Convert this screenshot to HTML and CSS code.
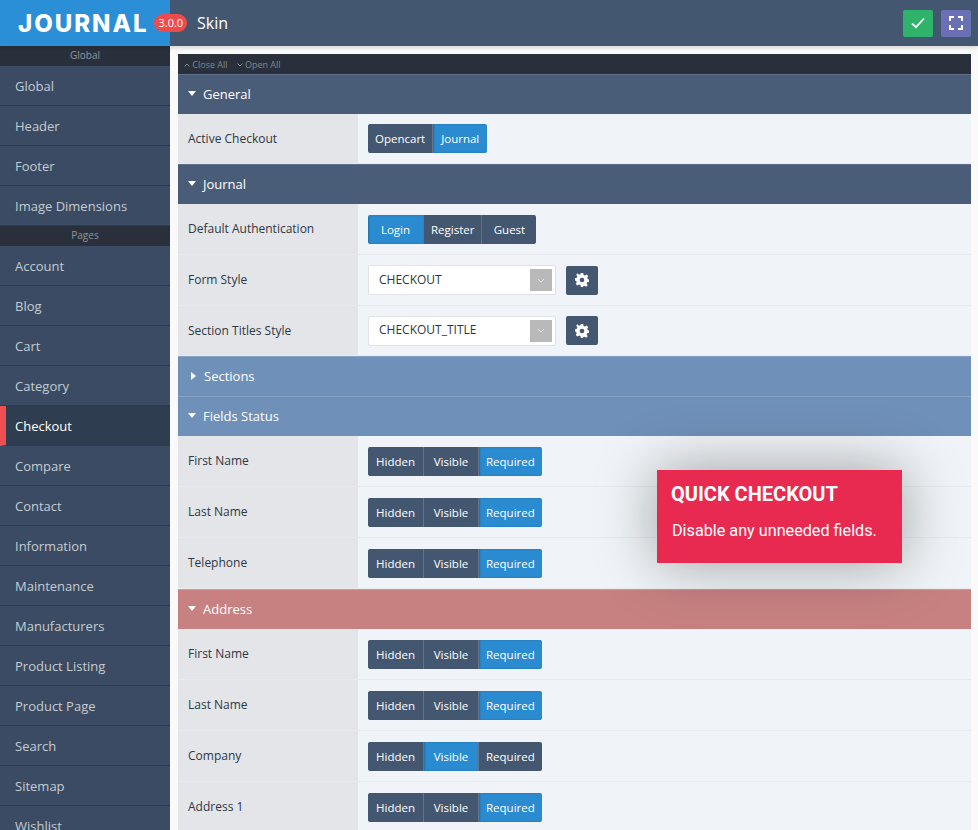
FILE: index.html
```html
<!DOCTYPE html>
<html lang="en">
<head>
  <meta charset="UTF-8" />
  <title>Journal - Skin</title>
  <link rel="stylesheet" href="styles.css">
</head>
<body>

  <header class="topbar">
    <div class="logo">
      <span class="logo-text">JOURNAL</span>
      <span class="version">3.0.0</span>
    </div>
    <div class="page-title">Skin</div>
    <div class="top-actions">
      <button class="top-btn save">
        <svg width="14" height="12" viewBox="0 0 14 12"><path d="M1 6.5 L5 10.2 L13 1.5" fill="none" stroke="#fff" stroke-width="1.8"/></svg>
      </button>
      <button class="top-btn full">
        <svg width="14" height="14" viewBox="0 0 14 14"><path d="M1 5 V1 H5 M9 1 H13 V5 M13 9 V13 H9 M5 13 H1 V9" fill="none" stroke="#fff" stroke-width="2"/></svg>
      </button>
    </div>
  </header>

  <div class="layout">
    <nav class="sidebar">
      <div class="side-title">Global</div>
      <a class="side-item">Global</a>
      <a class="side-item">Header</a>
      <a class="side-item">Footer</a>
      <a class="side-item">Image Dimensions</a>
      <div class="side-title">Pages</div>
      <a class="side-item">Account</a>
      <a class="side-item">Blog</a>
      <a class="side-item">Cart</a>
      <a class="side-item">Category</a>
      <a class="side-item active">Checkout</a>
      <a class="side-item">Compare</a>
      <a class="side-item">Contact</a>
      <a class="side-item">Information</a>
      <a class="side-item">Maintenance</a>
      <a class="side-item">Manufacturers</a>
      <a class="side-item">Product Listing</a>
      <a class="side-item">Product Page</a>
      <a class="side-item">Search</a>
      <a class="side-item">Sitemap</a>
      <a class="side-item">Wishlist</a>
    </nav>

    <main class="content">
      <div class="toolbar">
        <span class="tool">
          <svg width="6" height="4" viewBox="0 0 6 4"><path d="M0.5 3.5 L3 1 L5.5 3.5" fill="none" stroke="#7d8794" stroke-width="1"/></svg>
          Close All
        </span>
        <span class="tool">
          <svg width="6" height="4" viewBox="0 0 6 4"><path d="M0.5 0.5 L3 3 L5.5 0.5" fill="none" stroke="#7d8794" stroke-width="1"/></svg>
          Open All
        </span>
      </div>

      <div class="section"><i class="caret"></i>General</div>
      <div class="row short">
        <div class="label">Active Checkout</div>
        <div class="value">
          <div class="btn-group"><span class="seg">Opencart</span><span class="seg on">Journal</span></div>
        </div>
      </div>

      <div class="section"><i class="caret"></i>Journal</div>
      <div class="row">
        <div class="label">Default Authentication</div>
        <div class="value">
          <div class="btn-group"><span class="seg on">Login</span><span class="seg">Register</span><span class="seg">Guest</span></div>
        </div>
      </div>
      <div class="row">
        <div class="label">Form Style</div>
        <div class="value">
          <div class="select">CHECKOUT<span class="select-arrow"><svg width="8" height="5" viewBox="0 0 8 5"><path d="M1 1 L4 4 L7 1" fill="none" stroke="#e4e4e4" stroke-width="1"/></svg></span></div>
          <button class="gear"><svg width="14" height="14" viewBox="0 0 24 24"><path fill="#fff" fill-rule="evenodd" d="M10 0h4l.7 3.3 2.3 1 2.9-1.8 2.8 2.8L21 8.2l1 2.3 2 .5v4l-3 .7-1 2.3 1.8 2.8-2.8 2.8-2.9-1.8-2.3 1L14 24h-4l-.7-3.3-2.3-1-2.9 1.8-2.8-2.8L3 15.8l-1-2.3-2-.5V9l3-.7 1-2.3-1.800-2.800L4 .4 6.900 3l2.300-1zM12 8a4 4 0 1 0 0 8 4 4 0 0 0 0-8z"/></svg></button>
        </div>
      </div>
      <div class="row short">
        <div class="label">Section Titles Style</div>
        <div class="value">
          <div class="select">CHECKOUT_TITLE<span class="select-arrow"><svg width="8" height="5" viewBox="0 0 8 5"><path d="M1 1 L4 4 L7 1" fill="none" stroke="#e4e4e4" stroke-width="1"/></svg></span></div>
          <button class="gear"><svg width="14" height="14" viewBox="0 0 24 24"><path fill="#fff" fill-rule="evenodd" d="M10 0h4l.7 3.3 2.3 1 2.9-1.8 2.8 2.8L21 8.2l1 2.3 2 .5v4l-3 .7-1 2.3 1.8 2.8-2.8 2.8-2.9-1.8-2.3 1L14 24h-4l-.7-3.3-2.3-1-2.9 1.8-2.8-2.8L3 15.8l-1-2.3-2-.5V9l3-.7 1-2.3-1.800-2.800L4 .4 6.900 3l2.300-1zM12 8a4 4 0 1 0 0 8 4 4 0 0 0 0-8z"/></svg></button>
        </div>
      </div>

      <div class="section sub"><i class="caret right"></i>Sections</div>
      <div class="section sub"><i class="caret"></i>Fields Status</div>
      <div class="row">
        <div class="label">First Name</div>
        <div class="value"><div class="btn-group"><span class="seg">Hidden</span><span class="seg">Visible</span><span class="seg on">Required</span></div></div>
      </div>
      <div class="row">
        <div class="label">Last Name</div>
        <div class="value"><div class="btn-group"><span class="seg">Hidden</span><span class="seg">Visible</span><span class="seg on">Required</span></div></div>
      </div>
      <div class="row">
        <div class="label">Telephone</div>
        <div class="value"><div class="btn-group"><span class="seg">Hidden</span><span class="seg">Visible</span><span class="seg on">Required</span></div></div>
      </div>

      <div class="section rose"><i class="caret"></i>Address</div>
      <div class="row">
        <div class="label">First Name</div>
        <div class="value"><div class="btn-group"><span class="seg">Hidden</span><span class="seg">Visible</span><span class="seg on">Required</span></div></div>
      </div>
      <div class="row">
        <div class="label">Last Name</div>
        <div class="value"><div class="btn-group"><span class="seg">Hidden</span><span class="seg">Visible</span><span class="seg on">Required</span></div></div>
      </div>
      <div class="row">
        <div class="label">Company</div>
        <div class="value"><div class="btn-group"><span class="seg">Hidden</span><span class="seg on">Visible</span><span class="seg">Required</span></div></div>
      </div>
      <div class="row">
        <div class="label">Address 1</div>
        <div class="value"><div class="btn-group"><span class="seg">Hidden</span><span class="seg">Visible</span><span class="seg on">Required</span></div></div>
      </div>
    </main>
  </div>

  <div class="callout">
    <h3>QUICK CHECKOUT</h3>
    <p>Disable any unneeded fields.</p>
  </div>

</body>
</html>
```

FILE: styles.css
```css
html, body {
  height: 830px;
  overflow: hidden;
}
body {
  margin: 0;
  font-family: 'Open Sans', sans-serif;
  font-size: 12px;
  background: #fafafa;
  color: #2f3744;
}
.topbar {
  display: flex;
  align-items: center;
  height: 46px;
  background: #445770;
  box-shadow: 0 2px 4px rgba(0, 0, 0, .15);
  position: relative;
}
.logo {
  display: flex;
  align-items: center;
  width: 170px;
  height: 46px;
  padding-left: 18px;
  box-sizing: border-box;
  background: #2b8fd8;
  flex-shrink: 0;
}
.logo-text {
  font-family: 'Inter', sans-serif;
  font-size: 24px;
  font-weight: 800;
  color: #fff;
  letter-spacing: 2px;
}
.version {
  flex-shrink: 0;
  margin-left: 6px;
  padding: 0 4px;
  height: 18px;
  line-height: 18px;
  border-radius: 9px;
  background: #ee4c4c;
  color: #fff;
  font-size: 11px;
  position: relative;
}
.page-title {
  margin-left: 27px;
  font-size: 16px;
  color: #fff;
}
.top-actions {
  display: flex;
  gap: 8px;
  margin-left: auto;
  padding-right: 7px;
}
.top-btn {
  display: flex;
  align-items: center;
  justify-content: center;
  width: 30px;
  height: 27px;
  padding: 0;
  border: 0;
  border-radius: 2px;
}
.save { background: #2fb36a; }
.full { background: #6a70b4; }

.layout {
  display: flex;
}
.sidebar {
  width: 170px;
  flex-shrink: 0;
  background: #3a4b63;
}
.side-title {
  height: 20px;
  line-height: 19px;
  text-align: center;
  font-size: 10px;
  color: #8e959f;
  background: #2a303b;
}
.side-item {
  display: block;
  height: 40px;
  line-height: 39px;
  padding: 1px 0 0 15px;
  box-sizing: border-box;
  font-size: 13px;
  color: #c6cbd2;
  border-bottom: 1px solid #2e3c50;
}
.side-item:nth-last-child(1) { border-bottom: 0; }
.side-item.active {
  background: #2f3d51;
  color: #fff;
  font-weight: 500;
  border-left: 6px solid #f04f52;
  padding-left: 9px;
}

.content {
  width: 793px;
  margin: 8px 0 0 8px;
  flex-shrink: 0;
}
.toolbar {
  display: flex;
  gap: 9px;
  height: 20px;
  align-items: center;
  padding-left: 6px;
  background: #2a303b;
  font-size: 9px;
  color: #7d8794;
}
.tool svg { vertical-align: 1px; }
.section {
  display: flex;
  align-items: center;
  height: 40px;
  box-sizing: border-box;
  padding: 0 0 2px 10px;
  background: #4a5d78;
  color: #fff;
  font-size: 13px;
  font-weight: 500;
  border-top: 1px solid #5f708a;
}
.section.sub {
  background: #6f90b9;
  border-top-color: #86a3c7;
}
.section.rose {
  background: #c78181;
  border-top-color: #d09a9a;
}
.caret {
  width: 0;
  height: 0;
  margin-right: 7px;
  border-left: 4.5px solid transparent;
  border-right: 4.5px solid transparent;
  border-top: 5px solid #fff;
}
.caret.right {
  margin: 0 8px 0 3px;
  border-top: 4.5px solid transparent;
  border-bottom: 4.5px solid transparent;
  border-left: 5px solid #fff;
  border-right: 0;
}
.row {
  display: flex;
  height: 51px;
  box-sizing: border-box;
  border-bottom: 1px solid #e8eaee;
}
.row.short { height: 50px; }
.label {
  display: flex;
  align-items: center;
  width: 180px;
  padding: 0 0 1px 10px;
  box-sizing: border-box;
  background: #e3e5e9;
  font-size: 12px;
}
.value {
  display: flex;
  align-items: center;
  gap: 10px;
  flex: 1;
  padding-left: 10px;
  background: #f0f3f7;
}
.btn-group {
  display: flex;
  height: 29px;
  border-radius: 2px;
  overflow: hidden;
}
.seg {
  display: flex;
  align-items: center;
  justify-content: center;
  min-width: 55px;
  box-sizing: border-box;
  padding: 0 7px;
  background: #445770;
  color: #fff;
  font-size: 11.5px;
  font-weight: 500;
  border-left: 1px solid #62738a;
}
.seg:first-child { border-left: 0; }
.seg.on {
  background: #2b8bd0;
  box-shadow: inset 1px 0 2px rgba(0, 0, 0, .2);
}
.select {
  display: flex;
  align-items: center;
  justify-content: space-between;
  width: 188px;
  height: 30px;
  box-sizing: border-box;
  padding: 0 3px 2px 10px;
  background: #fff;
  border: 1px solid #dfe2e6;
  border-radius: 2px;
  font-size: 12px;
}
.select-arrow {
  display: flex;
  align-items: center;
  justify-content: center;
  width: 22px;
  height: 22px;
  margin-bottom: -2px;
  background: #b9b9b9;
}
.gear {
  display: flex;
  align-items: center;
  justify-content: center;
  width: 32px;
  height: 29px;
  padding: 0;
  border: 0;
  border-radius: 2px;
  background: #445770;
}
.callout {
  position: absolute;
  left: 657px;
  top: 470px;
  width: 245px;
  height: 93px;
  box-sizing: border-box;
  padding: 12px 14px;
  background: #e92a50;
  color: #fff;
  font-family: 'Roboto', sans-serif;
  box-shadow: 0 0 60px rgba(0, 0, 0, .35);
}
.callout h3 {
  margin: 0;
  font-size: 20px;
  line-height: 24px;
  font-weight: 700;
}
.callout p {
  margin: 14px 0 0 1px;
  font-size: 16.2px;
  line-height: 22px;
}
```
